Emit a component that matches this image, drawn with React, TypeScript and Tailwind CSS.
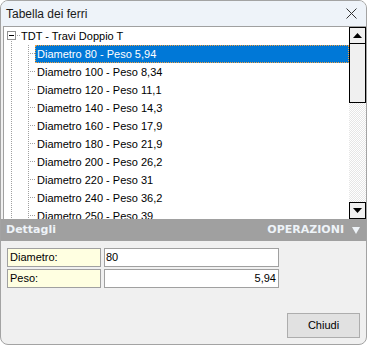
import React from 'react';

const rows = [
  ['80', '5,94'],
  ['100', '8,34'],
  ['120', '11,1'],
  ['140', '14,3'],
  ['160', '17,9'],
  ['180', '21,9'],
  ['200', '26,2'],
  ['220', '31'],
  ['240', '36,2'],
  ['250', '39'],
];

// dotted tree line drawn as single pixels
function VDots({ x, from, to }: { x: number; from: number; to: number }) {
  const out = [];
  for (let y = from; y < to; y += 2) out.push(<rect key={y} x={x} y={y} width="1" height="1" fill="#a0a0a0" />);
  return <>{out}</>;
}

function HDots({ y, from, to }: { y: number; from: number; to: number }) {
  const out = [];
  for (let x = from; x < to; x += 2) out.push(<rect key={x} x={x} y={y} width="1" height="1" fill="#a0a0a0" />);
  return <>{out}</>;
}

function RootRow() {
  return (
    <div className="flex h-[18px] items-center">
      <svg width="16" height="18" className="shrink-0">
        <rect x="3.5" y="4.5" width="8" height="8" fill="#fff" stroke="#919191" />
        <rect x="5" y="8" width="5" height="1" fill="#000" />
        <HDots y={8} from={13} to={16} />
        <VDots x={7} from={14} to={18} />
      </svg>
      <span className="px-[1px] leading-[18px]">TDT - Travi Doppio T</span>
    </div>
  );
}

function ChildRow({ d, p, selected }: { d: string; p: string; selected?: boolean }) {
  return (
    <div className="flex h-[18px] items-stretch">
      <svg width="31" height="18" className="shrink-0">
        <VDots x={7} from={0} to={18} />
        <VDots x={24} from={0} to={18} />
        <HDots y={8} from={26} to={31} />
      </svg>
      <div
        className={
          selected
            ? 'flex-1 bg-[#0078d7] pl-[2px] leading-[18px] text-white outline-1 -outline-offset-1 outline-dotted outline-[#f0a040]'
            : 'flex-1 pl-[2px] leading-[18px]'
        }
      >
        Diametro {d} - Peso {p}
      </div>
    </div>
  );
}

function ScrollBtn({ up }: { up?: boolean }) {
  return (
    <div className="flex h-[17px] items-center justify-center border border-black bg-[#f0f0f0]">
      <svg width="9" height="5">
        <path d={up ? 'M0 5 L4.5 0 L9 5 Z' : 'M0 0 L4.5 5 L9 0 Z'} fill="#000" />
      </svg>
    </div>
  );
}

export default function App() {
  return (
    <div className="flex h-[345px] w-[367px] flex-col overflow-hidden rounded-[8px] border border-[#a3a3a3] bg-[#f0f0f0] font-['Liberation_Sans',Arial,sans-serif] text-[11px] text-black">
      <div className="flex h-[25px] shrink-0 items-center justify-between bg-[#eef3f9] pl-[5px] pr-[9px]">
        <span className="text-[12px] text-[#1a1a1a]">Tabella dei ferri</span>
        <svg width="11" height="11" viewBox="0 0 11 11">
          <path d="M0.5 0.5 L10.5 10.5 M10.5 0.5 L0.5 10.5" stroke="#333" strokeWidth="1" />
        </svg>
      </div>

      <div className="pl-[2px]">
        <div className="flex h-[193px] border-l border-t border-[#a0a0a0] bg-white">
          <div className="flex-1 overflow-hidden">
            <RootRow />
            {rows.map(([d, p], i) => (
              <ChildRow key={d} d={d} p={p} selected={i === 0} />
            ))}
          </div>
          <div className="flex w-[17px] shrink-0 flex-col">
            <ScrollBtn up />
            <div className="h-[59px] border border-t-0 border-black bg-[#f0f0f0]" />
            <div className="flex-1 bg-[repeating-conic-gradient(#e6e6e6_0_25%,#ffffff_0_50%)] bg-[length:2px_2px]" />
            <ScrollBtn />
          </div>
        </div>
      </div>

      <div className="flex h-[22px] shrink-0 items-center justify-between bg-[#a0a0a0] pl-[5px] pr-[6px] font-['DejaVu_Sans',Verdana,sans-serif] text-[11px] font-bold text-[#eef3f8]">
        <span>Dettagli</span>
        <div className="flex items-center gap-[8px]">
          <span>OPERAZIONI</span>
          <svg width="8" height="7">
            <path d="M0 0 L8 0 L4 7 Z" fill="#eef3f8" />
          </svg>
        </div>
      </div>

      <div className="flex flex-1 flex-col px-[6px] pt-[7px]">
        <div className="flex flex-col gap-[2px]">
          <div className="flex gap-[3px]">
            <div className="h-[19px] w-[94px] border border-[#a0a0a0] bg-[#ffffe1] pl-[2px] leading-[17px]">Diametro:</div>
            <div className="h-[19px] w-[175px] border border-[#a0a0a0] bg-white pl-[1px] leading-[17px]">80</div>
          </div>
          <div className="flex gap-[3px]">
            <div className="h-[19px] w-[94px] border border-[#a0a0a0] bg-[#ffffe1] pl-[2px] leading-[17px]">Peso:</div>
            <div className="h-[19px] w-[175px] border border-[#a0a0a0] bg-white pr-[2px] text-right leading-[17px]">5,94</div>
          </div>
        </div>
        <div className="mt-auto mb-[6px] flex justify-end pr-[-1px]">
          <button className="h-[25px] w-[73px] border border-[#adadad] bg-[#e1e1e1] text-[11px]">Chiudi</button>
        </div>
      </div>
    </div>
  );
}
